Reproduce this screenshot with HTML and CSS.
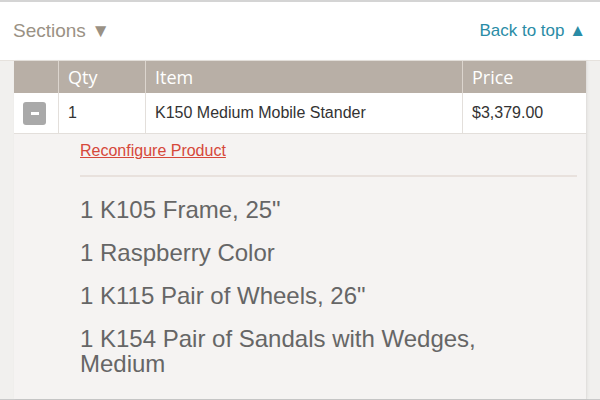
FILE: index.html
```html
<!DOCTYPE html>
<html lang="en">
<head>
    <meta charset="UTF-8">
    <meta name="viewport" content="width=device-width, initial-scale=1.0">
    <title>Cart</title>
    <link rel="stylesheet" href="styles.css">
</head>
<body>
<div class="topbar">
    <a class="sections" href="#">Sections &#9660;</a>
    <a class="back-top" href="#">Back to top &#9650;</a>
</div>
<div class="page">
    <div class="panel">
        <table class="cart">
            <tr>
                <th class="col-btn"></th>
                <th class="col-qty">Qty</th>
                <th class="col-item">Item</th>
                <th class="col-price">Price</th>
            </tr>
            <tr>
                <td><button class="remove-btn"><span></span></button></td>
                <td>1</td>
                <td>K150 Medium Mobile Stander</td>
                <td>$3,379.00</td>
            </tr>
        </table>
        <div class="details">
            <a class="reconfigure" href="#">Reconfigure Product</a>
            <ul class="options">
                <li>1 K105 Frame, 25"</li>
                <li>1 Raspberry Color</li>
                <li>1 K115 Pair of Wheels, 26"</li>
                <li>1 K154 Pair of Sandals with Wedges, Medium</li>
            </ul>
        </div>
    </div>
</div>
</body>
</html>
```

FILE: styles.css
```css
/* mobile cart view */
body {
    font-family: "Liberation Sans", Arial, sans-serif;
    background-color: #f1f0ee;
    margin: 0;
    padding: 0;
}
.topbar {
    display: flex;
    justify-content: space-between;
    align-items: center;
    height: 58px;
    padding: 0 14px 0 13px;
    background-color: #fff;
    border-top: 2px solid #d4d4d4;
}
.topbar a {
    text-decoration: none;
}
.sections {
    color: #9a9184;
    font-size: 19px;
}
.back-top {
    color: #2a8ca6;
    font-size: 17px;
}
.page {
    border-top: 1px solid #e6e2dd;
    height: 338px;
    border-bottom: 1px solid #c9c9c9;
}
.panel {
    margin: 0 13px 0 14px;
    height: 100%;
    background-color: #f5f3f2;
    border-right: 1px solid #e2e0de;
    box-shadow: 1px 0 3px rgba(0, 0, 0, 0.05);
}
.cart {
    width: 100%;
    border-collapse: collapse;
}
.cart th {
    height: 32px;
    padding: 0 0 0 9px;
    background-color: #b8afa6;
    color: #fff;
    font-family: "Open Sans", sans-serif;
    font-size: 18px;
    font-weight: normal;
    text-align: left;
    border-left: 1px solid #dcd5ce;
}
.cart th:first-child {
    border-left: none;
}
.cart td {
    height: 40px;
    padding: 0 0 0 9px;
    background-color: #fff;
    color: #333;
    font-size: 16px;
    border-left: 1px solid #e3dfdb;
    border-bottom: 1px solid #e3dfdb;
}
.cart td:first-child {
    border-left: none;
}
.col-btn {
    width: 35px;
}
.col-qty {
    width: 77px;
}
.col-item {
    width: 307px;
}
.remove-btn {
    display: flex;
    align-items: center;
    justify-content: center;
    width: 23px;
    height: 23px;
    padding: 0;
    border: none;
    border-radius: 3px;
    background-color: #a9a9a9;
    cursor: pointer;
}
.remove-btn span {
    display: block;
    width: 8px;
    height: 3px;
    background-color: #fff;
}
.details {
    padding: 8px 9px 0 66px;
}
.reconfigure {
    color: #d6483a;
    font-size: 16px;
}
.options {
    list-style: none;
    margin: 15px 0 0;
    padding: 20px 0 0 0;
    border-top: 2px solid #e8e1dd;
}
.options li {
    font-size: 24px;
    line-height: 25px;
    color: #666;
    margin-bottom: 18px;
    padding-right: 60px;
}
```
